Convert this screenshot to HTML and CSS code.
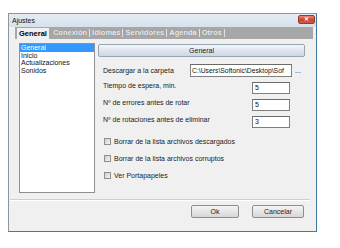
FILE: index.html
```html
<!DOCTYPE html>
<html lang="es">
<head>
  <meta charset="UTF-8">
  <meta name="viewport" content="width=device-width, initial-scale=1.0">
  <title>Ajustes</title>
  <link rel="stylesheet" href="styles.css">
</head>
<body>
  <div class="window">
    <div class="titlebar">
      <span class="title">Ajustes</span>
      <span class="close">✕</span>
    </div>
    <div class="tabs">
      <span class="tab active">General</span>
      <span class="tab">Conexión</span>
      <span class="tab">Idiomas</span>
      <span class="tab">Servidores</span>
      <span class="tab">Agenda</span>
      <span class="tab">Otros</span>
    </div>
    <div class="main">
      <ul class="list">
        <li class="selected">General</li>
        <li>Inicio</li>
        <li>Actualizaciones</li>
        <li>Sonidos</li>
      </ul>
      <div class="panel">
        <div class="panel-head">General</div>
        <div class="row row-path">
          <span class="label label-path">Descargar a la carpeta</span>
          <span class="field path">C:\Users\Softonic\Desktop\Sof</span>
          <span class="dots">...</span>
        </div>
        <div class="row">
          <span class="label">Tiempo de espera, min.</span>
          <span class="field num">5</span>
        </div>
        <div class="row">
          <span class="label">Nº de errores antes de rotar</span>
          <span class="field num">5</span>
        </div>
        <div class="row">
          <span class="label">Nº de rotaciones antes de eliminar</span>
          <span class="field num">3</span>
        </div>
        <div class="check"><span class="box"></span>Borrar de la lista archivos descargados</div>
        <div class="check"><span class="box"></span>Borrar de la lista archivos corruptos</div>
        <div class="check"><span class="box"></span>Ver Portapapeles</div>
      </div>
    </div>
    <div class="footer">
      <button class="btn btn-ok">Ok</button>
      <button class="btn btn-cancel">Cancelar</button>
    </div>
  </div>
</body>
</html>
```

FILE: styles.css
```css
* {
  box-sizing: border-box;
}
body {
  margin: 0;
  padding: 13px 0 0 8px;
  background: #ffffff;
  font-family: 'Liberation Sans', Arial, sans-serif;
  font-size: 7px;
  color: #1a1a1a;
}
.window {
  width: 309px;
  height: 219px;
  background: #f0f0f0;
  border: 1px solid #8b96a0;
  border-right-color: #3a7aa2;
  border-bottom-color: #3a7ea3;
  display: flex;
  flex-direction: column;
}
.titlebar {
  height: 13px;
  flex: none;
  display: flex;
  justify-content: space-between;
  align-items: flex-start;
  padding-left: 3px;
  background: linear-gradient(#e4ebf2, #d6e1ec);
}
.title {
  line-height: 13px;
  color: #111;
}
.close {
  width: 17px;
  height: 9px;
  margin: 1px 1px 0 0;
  background: linear-gradient(#e58a7c, #c8432f 55%, #d35a45);
  border: 1px solid #9a3a2c;
  border-radius: 2px;
  color: #fff;
  font-size: 6px;
  line-height: 7px;
  text-align: center;
  font-weight: bold;
}
.tabs {
  height: 12px;
  flex: none;
  margin: 0 3px 0 6px;
  padding-left: 2px;
  display: flex;
  align-items: flex-end;
  background: #a7a7a7;
}
.tab {
  font-size: 7.5px;
  font-weight: bold;
  line-height: 8px;
  padding: 0 2px;
  margin-bottom: 2px;
  color: #ededed;
  text-shadow: 0 0 1px #7b7b7b;
  border-right: 1px solid #e2e2e2;
}
.tab.active {
  background: #f0f0f0;
  color: #000;
  text-shadow: none;
  border-right: none;
  padding: 1px 2px;
  line-height: 9px;
  margin: 0 2px 0 0;
}
.main {
  height: 154px;
  flex: none;
  display: flex;
  gap: 3px;
  padding: 4px 0 0 10px;
}
.list {
  width: 76px;
  height: 150px;
  margin: 0;
  padding: 0;
  list-style: none;
  background: #fff;
  border: 1px solid #8e9092;
}
.list li {
  line-height: 7.5px;
  padding-left: 1px;
  color: #111;
}
.list li.selected {
  background: #3399ff;
  color: #fff;
}
.panel {
  width: 207px;
  padding-top: 1px;
}
.panel-head {
  height: 13px;
  line-height: 11px;
  text-align: center;
  color: #222;
  background: linear-gradient(#f4f7fa, #dde5ee 50%, #cdd7e2);
  border: 1px solid #97a5b3;
  border-radius: 2px;
}
.row {
  display: flex;
  align-items: flex-start;
  height: 12px;
  margin-top: 5px;
  padding-left: 5px;
}
.row-path {
  height: 13px;
  margin-top: 7px;
  align-items: center;
}
.label {
  width: 149px;
  line-height: 8px;
  flex: none;
}
.label-path {
  width: 87px;
}
.field {
  height: 100%;
  background: #fff;
  border: 1px solid #7f7f7f;
  border-top-color: #6a6a6a;
  line-height: 10px;
  padding-left: 2px;
  overflow: hidden;
  white-space: nowrap;
  color: #111;
}
.path {
  width: 102px;
  flex: none;
  line-height: 11px;
  padding-left: 1px;
  font-size: 6.8px;
}
.num {
  width: 38px;
}
.dots {
  margin-left: 3px;
  line-height: 8px;
}
.check {
  display: flex;
  align-items: center;
  gap: 3px;
  height: 7px;
  line-height: 7px;
  margin-top: 10px;
  padding-left: 6px;
  color: #222;
}
.box {
  width: 7px;
  height: 7px;
  flex: none;
  border: 1px solid #8f8f8f;
  background: linear-gradient(135deg, #cfcfcf, #f2f2f2);
}
.footer {
  flex: none;
  margin: 6px 6px 0 1px;
  padding: 5px 6px 0 0;
  border-top: 1px solid #cfcfcf;
  box-shadow: inset 0 1px 0 #ffffff;
  display: flex;
  justify-content: flex-end;
  gap: 13px;
}
.btn {
  height: 13px;
  padding: 0;
  font-family: 'Liberation Sans', Arial, sans-serif;
  font-size: 7px;
  color: #222;
  background: linear-gradient(#f4f4f4, #e6e6e6 50%, #d6d6d6);
  border: 1px solid #8e8e8e;
  border-radius: 2px;
}
.btn-ok {
  width: 48px;
}
.btn-cancel {
  width: 52px;
}
```
